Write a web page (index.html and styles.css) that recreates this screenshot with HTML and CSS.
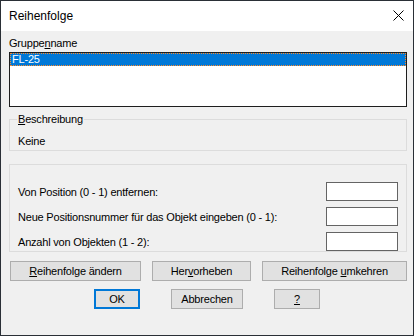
FILE: index.html
```html
<!DOCTYPE html>
<html lang="de">
  <head>
    <meta charset="UTF-8" />
    <title>Reihenfolge</title>
    <link rel="stylesheet" href="styles.css">
  </head>
  <body>
    <div class="window">
      <div class="titlebar">
        <div class="title">Reihenfolge</div>
        <div class="close">
          <svg width="11" height="11" viewBox="0 0 11 11">
            <path d="M0.5 0.5 L10.5 10.5 M10.5 0.5 L0.5 10.5" stroke="#000" stroke-width="1" fill="none" />
          </svg>
        </div>
      </div>
      <div class="content">
        <div class="label">Gruppe<u>n</u>name</div>
        <div class="listbox">
          <div class="list-item selected">FL-25</div>
        </div>

        <fieldset class="group desc">
          <legend><u>B</u>eschreibung</legend>
          <div class="desc-text">Keine</div>
        </fieldset>

        <div class="group fields">
          <div class="field-row">
            <span>Von Position (0 - 1) entfernen:</span>
            <div class="textbox"></div>
          </div>
          <div class="field-row">
            <span>Neue Positionsnummer für das Objekt eingeben (0 - 1):</span>
            <div class="textbox"></div>
          </div>
          <div class="field-row">
            <span>Anzahl von Objekten (1 - 2):</span>
            <div class="textbox"></div>
          </div>
        </div>

        <div class="button-row actions">
          <div class="button btn-change"><span><u>R</u>eihenfolge ändern</span></div>
          <div class="button btn-highlight"><span>Her<u>v</u>orheben</span></div>
          <div class="button btn-reverse"><span>Reihenfolge <u>u</u>mkehren</span></div>
        </div>
        <div class="button-row dialog">
          <div class="button btn-small default"><span>OK</span></div>
          <div class="button btn-cancel"><span>Abbrechen</span></div>
          <div class="button btn-small"><span><u>?</u></span></div>
        </div>
      </div>
    </div>
  </body>
</html>
```

FILE: styles.css
```css
body {
  margin: 0;
  font-family: "Liberation Sans", Arial, sans-serif;
  font-size: 11px;
  letter-spacing: -0.2px;
  color: #000;
  background: #ffffff;
}
.window {
  width: 414px;
  height: 336px;
  box-sizing: border-box;
  border: 1px solid #2a2f36;
  background-color: #f0f0f0;
  display: flex;
  flex-direction: column;
}
.titlebar {
  height: 30px;
  background-color: #ffffff;
  display: flex;
  align-items: center;
  padding-left: 8px;
}
.title {
  font-size: 12px;
  letter-spacing: 0;
  flex-grow: 1;
  padding-bottom: 1px;
}
.close {
  width: 11px;
  height: 11px;
  margin-right: 9px;
  margin-bottom: 1px;
  display: flex;
}
.content {
  padding: 6px 6px 0 8px;
  display: flex;
  flex-direction: column;
}
.label {
  height: 13px;
  line-height: 13px;
  margin-bottom: 2px;
}
.listbox {
  height: 55px;
  box-sizing: border-box;
  border: 1px solid #1e1e1e;
  background: #ffffff;
}
.list-item {
  height: 13px;
  line-height: 13px;
  padding-left: 2px;
}
.selected {
  background-color: #0078d7;
  color: #ffffff;
  outline: 1px dotted #ff8a28;
  outline-offset: -1px;
}

.group {
  border: 1px solid #dcdcdc;
  margin: 0;
}
.desc {
  margin-top: 6px;
  padding: 9px 8px 2px 8px;
}
.desc legend {
  padding: 0 1px;
  margin-left: -1px;
  line-height: 13px;
}
.desc-text {
  height: 13px;
  line-height: 13px;
}
.fields {
  margin-top: 13px;
  padding: 17px 8px 0 8px;
  display: flex;
  flex-direction: column;
  gap: 6px;
}
.field-row {
  display: flex;
  justify-content: space-between;
  align-items: center;
}
.textbox {
  width: 72px;
  height: 19px;
  box-sizing: border-box;
  border: 1px solid #646464;
  background: #ffffff;
}

.button-row {
  display: flex;
}
.actions {
  margin-top: 9px;
  padding-left: 1px;
  gap: 11px;
}
.dialog {
  margin-top: 8px;
  justify-content: center;
  gap: 31px;
  padding-right: 2px;
}
.button {
  height: 20px;
  box-sizing: border-box;
  border: 1px solid #adadad;
  background-color: #e1e1e1;
  display: flex;
  align-items: center;
  justify-content: center;
}
.btn-change {
  width: 131px;
}
.btn-highlight {
  width: 99px;
}
.btn-reverse {
  width: 145px;
}
.btn-small {
  width: 46px;
}
.btn-cancel {
  width: 72px;
}
.default {
  border: 2px solid #0078d7;
}
```
